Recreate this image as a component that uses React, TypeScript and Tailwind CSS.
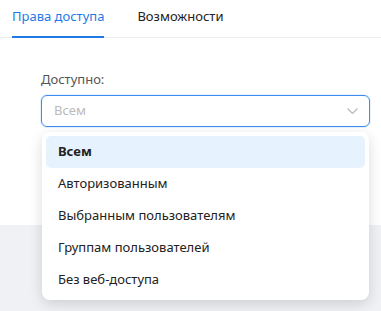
import React from 'react';

const options = ['Всем', 'Авторизованным', 'Выбранным пользователям', 'Группам пользователей', 'Без веб-доступа'];

const App = () => {
  return (
    <div className="w-[381px] h-[311px] flex flex-col bg-white overflow-hidden" style={{ fontFamily: '"Noto Sans", sans-serif' }}>
      <div className="h-[38px] flex border-b border-[#ececef] px-3 gap-[33px] text-[13px] leading-none">
        <div className="h-[38px] pt-[10px] border-b-2 border-[#1f7ae6] text-[#1f7ae6]">Права доступа</div>
        <div className="h-[38px] pt-[10px] text-[#222]">Возможности</div>
      </div>
      <div className="relative h-[187px] pl-[41px] pt-[35px] pr-[11px]">
        <div className="text-[13px] text-[#555] leading-none mb-[9px]">Доступно:</div>
        <div className="h-[32px] border border-[#3d8cf0] rounded-[6px] flex items-center justify-between pl-[12px] pr-[11px] shadow-[0_0_0_1px_rgba(61,140,240,0.12)]">
          <span className="text-[13px] text-[#bbb]">Всем</span>
          <svg width="11" height="6" viewBox="0 0 11 6" fill="none">
            <path d="M0.5 0.5l5 5 5-5" stroke="#b5b5b5" strokeWidth="1.1" />
          </svg>
        </div>
        <div className="absolute left-[42px] top-[94px] w-[327px] bg-white rounded-[8px] shadow-[0_4px_14px_rgba(0,0,0,0.14)] p-[4px] z-10">
          {options.map((o, i) => (
            <div
              key={o}
              className={`h-[32px] flex items-center pl-[12px] text-[13px] rounded-[5px] text-[#222] ${
                i === 0 ? 'bg-[#e6f2fe] font-bold' : ''
              }`}
            >
              {o}
            </div>
          ))}
        </div>
      </div>
      <div className="flex-1 bg-[#f0f1f5]" />
    </div>
  );
};

export default App;
